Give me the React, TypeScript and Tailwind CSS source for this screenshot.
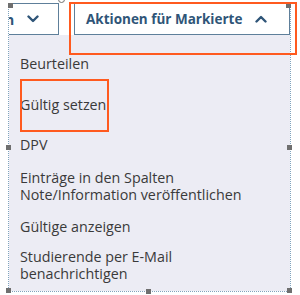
import React from "react";

function Chevron({ up = false }: { up?: boolean }) {
  return (
    <svg width="12" height="8" viewBox="0 0 12 8" className="shrink-0">
      <path
        d={up ? "M1.5 6.5 L6 2 L10.5 6.5" : "M1.5 1.5 L6 6 L10.5 1.5"}
        fill="none"
        stroke="#2f5578"
        strokeWidth="2.4"
        strokeLinecap="round"
        strokeLinejoin="round"
      />
    </svg>
  );
}

function Handle({ className }: { className: string }) {
  return <div className={`absolute w-[5px] h-[5px] bg-[#6f6f6f] ${className}`} />;
}

export default function App() {
  return (
    <div className="relative w-[300px] h-[295px] bg-white overflow-hidden font-['Open_Sans',sans-serif]">
      <div className="ml-[8px] mt-[3px] w-[283px] h-[289px] flex flex-col border-l border-r border-b border-dotted border-[#7fa3bd]">
        <div className="flex gap-[15px] h-[32px] bg-white">
          <div className="w-[50px] h-full flex items-center gap-[13px] border-t border-b border-r border-[#5e7f9a] bg-white overflow-hidden">
            <span className="text-[14px] font-bold text-[#2f5578] -ml-[4px]">n</span>
            <Chevron />
          </div>
          <div className="flex-1 h-full flex items-center gap-[13px] border border-[#5e7f9a] bg-white pl-[11px]">
            <span className="text-[13.5px] font-bold text-[#2f5578]">Aktionen für Markierte</span>
            <Chevron up />
          </div>
        </div>
        <div className="flex-1 flex flex-col bg-[#ececf4] pl-[11px] pt-[20px] text-[14.3px] leading-[17px] text-[#3a3a3a]">
          <div>Beurteilen</div>
          <div className="mt-[24px]">Gültig setzen</div>
          <div className="mt-[23px]">DPV</div>
          <div className="mt-[16px]">
            Einträge in den Spalten
            <br />
            Note/Information veröffentlichen
          </div>
          <div className="mt-[15px]">Gültige anzeigen</div>
          <div className="mt-[13px]">
            Studierende per E-Mail
            <br />
            benachrichtigen
          </div>
        </div>
      </div>

      <Handle className="left-[8px] top-[3px]" />
      <Handle className="left-[286px] top-[3px]" />
      <Handle className="left-[6px] top-[145px]" />
      <Handle className="left-[287px] top-[145px]" />
      <Handle className="left-[6px] top-[288px]" />
      <Handle className="left-[146px] top-[289px]" />
      <Handle className="left-[287px] top-[288px]" />
      <div className="absolute left-[58px] -top-[4px] w-[7px] h-[7px] rounded-full border border-[#6f6f6f] bg-white" />

      <div className="absolute left-[69px] top-[2px] w-[228px] h-[53px] border-2 border-[#ff5a1f]" />
      <div className="absolute left-[20px] top-[79px] w-[89px] h-[53px] border-2 border-[#ff5a1f]" />
    </div>
  );
}
